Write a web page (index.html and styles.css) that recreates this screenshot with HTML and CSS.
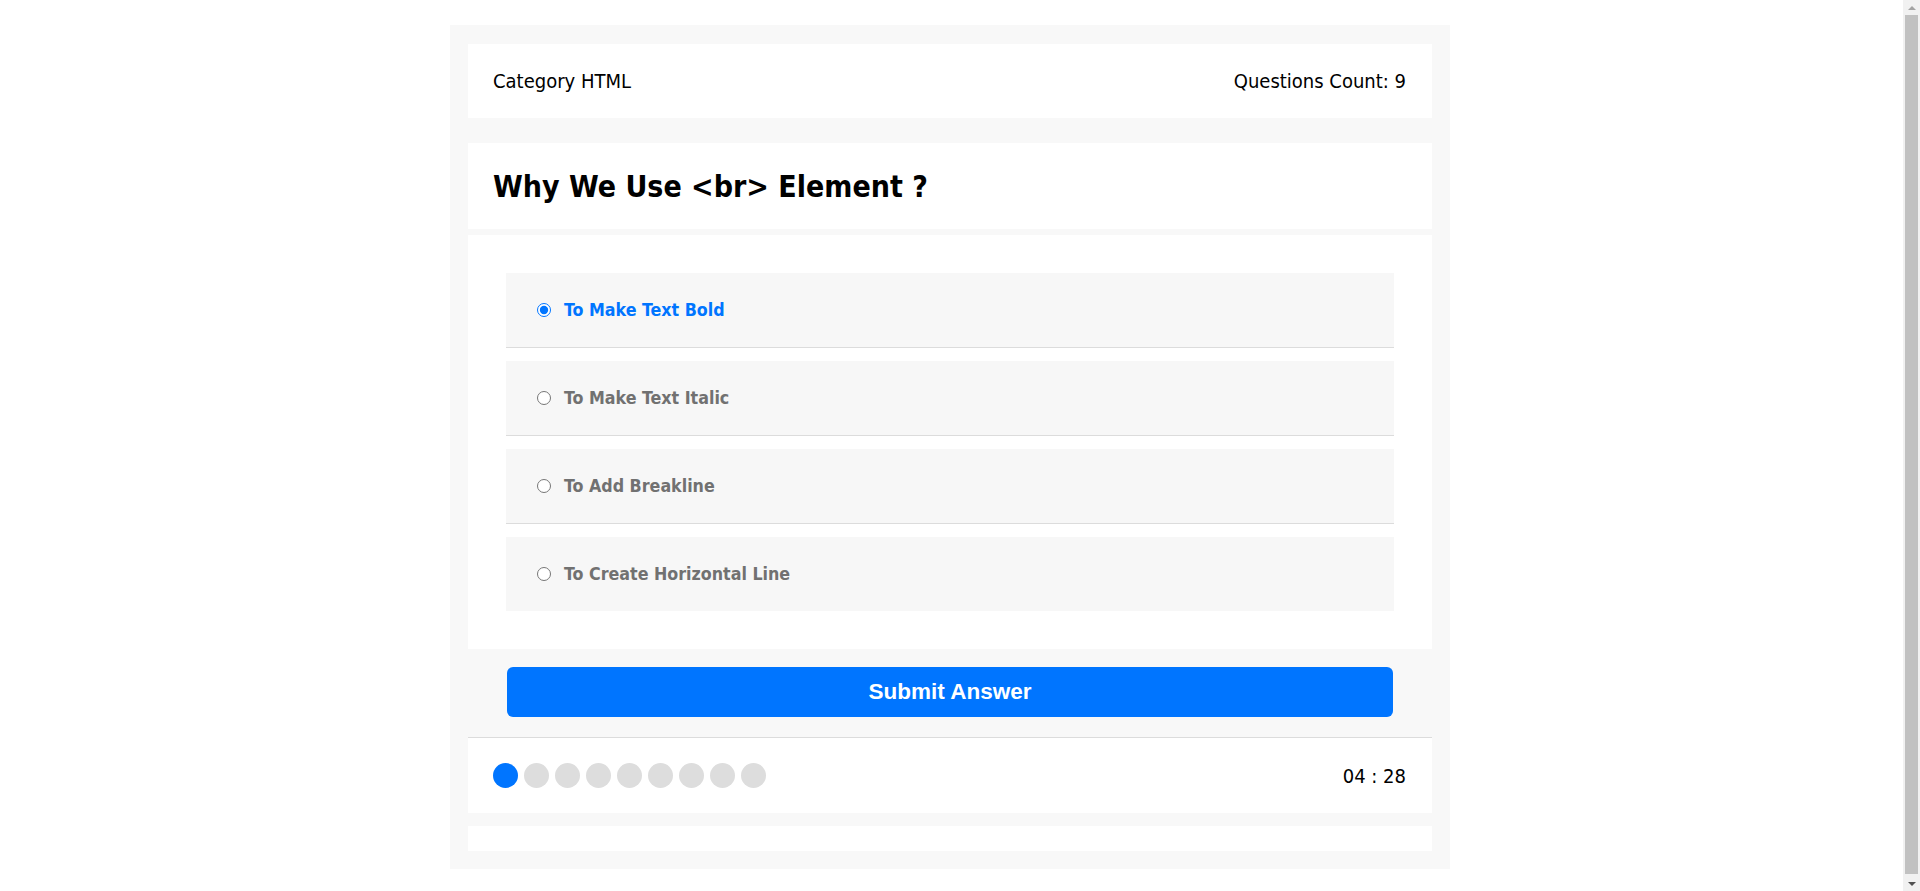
FILE: index.html
```html
<!DOCTYPE html>
<html lang="en">
<head>
<meta charset="UTF-8">
<title>Quiz App</title>
<link rel="stylesheet" href="styles.css">
</head>
<body>
<div class="quiz-app">
  <div class="quiz-info">
    <div class="category">Category <span>HTML</span></div>
    <div class="count">Questions Count: <span>9</span></div>
  </div>
  <div class="quiz-area">
    <h2>Why We Use &lt;br&gt; Element ?</h2>
  </div>
  <div class="answers-area">
    <div class="answer">
      <input type="radio" name="question" id="answer_1" checked>
      <label for="answer_1">To Make Text Bold</label>
    </div>
    <div class="answer">
      <input type="radio" name="question" id="answer_2">
      <label for="answer_2">To Make Text Italic</label>
    </div>
    <div class="answer">
      <input type="radio" name="question" id="answer_3">
      <label for="answer_3">To Add Breakline</label>
    </div>
    <div class="answer">
      <input type="radio" name="question" id="answer_4">
      <label for="answer_4">To Create Horizontal Line</label>
    </div>
  </div>
  <button class="submit-button">Submit Answer</button>
  <div class="bullets">
    <div class="spans">
      <span class="on"></span><span></span><span></span><span></span><span></span><span></span><span></span><span></span><span></span>
    </div>
    <div class="countdown">04 : 28</div>
  </div>
  <div class="results"></div>
</div>
<div class="scrollbar" aria-hidden="true">
  <div class="sb-button sb-up"><i></i></div>
  <div class="sb-thumb"></div>
  <div class="sb-button sb-down"><i></i></div>
</div>
</body>
</html>
```

FILE: styles.css
```css
* {
  box-sizing: border-box;
}

body {
  margin: 0;
  padding-right: 20px;
  background: #ffffff;
  font-family: "DejaVu Sans Condensed", "DejaVu Sans", sans-serif;
  font-stretch: condensed;
  color: #000;
}

/* window scrollbar lying over the right edge */
.scrollbar {
  position: fixed;
  top: 0;
  right: 0;
  bottom: 0;
  width: 17px;
  display: flex;
  flex-direction: column;
  background: #f1f1f1;
}

.sb-button {
  height: 15px;
  flex: none;
  display: flex;
  align-items: center;
  justify-content: center;
}

.sb-up i {
  width: 0;
  height: 0;
  border-left: 4px solid transparent;
  border-right: 4px solid transparent;
  border-bottom: 4px solid #a3a3a3;
}

.sb-down i {
  width: 0;
  height: 0;
  border-left: 4px solid transparent;
  border-right: 4px solid transparent;
  border-top: 4px solid #505050;
}

.sb-thumb {
  flex: 1;
  margin: 0 2px 2px;
  background: #c1c1c1;
}

.quiz-app {
  width: 1000px;
  margin: 25px auto 30px;
  padding: 19px 18px 18px;
  background: #f8f8f8;
}

.quiz-info {
  display: flex;
  justify-content: space-between;
  align-items: center;
  height: 74px;
  padding: 0 26px 0 25px;
  background: #fff;
  font-size: 20px;
}

.quiz-area {
  display: flex;
  align-items: center;
  height: 86px;
  margin-top: 25px;
  padding: 0 25px;
  background: #fff;
}

.quiz-area h2 {
  margin: 0;
  font-size: 30px;
  font-weight: bold;
}

.answers-area {
  margin-top: 6px;
  padding: 38px;
  background: #fff;
}

.answer {
  display: flex;
  align-items: center;
  height: 75px;
  padding-left: 31px;
  background: #f7f7f7;
  border-bottom: 1px solid #dcdcdc;
}

.answer + .answer {
  margin-top: 13px;
}

.answer:last-child {
  border-bottom: none;
  height: 74px;
}

.answer input {
  width: 14px;
  height: 14px;
  margin: 0;
  accent-color: #0075ff;
}

.answer label {
  margin-left: 13px;
  font-size: 17.7px;
  font-weight: bold;
  color: #717171;
  cursor: pointer;
}

.answer input:checked + label {
  color: #0075ff;
}

.submit-button {
  display: block;
  width: calc(100% - 78px);
  height: 50px;
  margin: 18px 39px 0;
  border: none;
  border-radius: 6px;
  background: #0075ff;
  color: #fff;
  font-family: "Liberation Sans", Arial, sans-serif;
  font-size: 22.5px;
  font-weight: bold;
  cursor: pointer;
}

.bullets {
  display: flex;
  justify-content: space-between;
  align-items: center;
  height: 76px;
  margin-top: 20px;
  padding: 0 26px 0 25px;
  background: #fff;
  border-top: 1px solid #dcdcdc;
}

.spans {
  display: flex;
  gap: 6px;
}

.spans span {
  width: 25px;
  height: 25px;
  border-radius: 50%;
  background: #dddddd;
}

.spans span.on {
  background: #0075ff;
}

.countdown {
  font-size: 20px;
}

.results {
  height: 25px;
  margin-top: 13px;
  background: #fff;
}
```
